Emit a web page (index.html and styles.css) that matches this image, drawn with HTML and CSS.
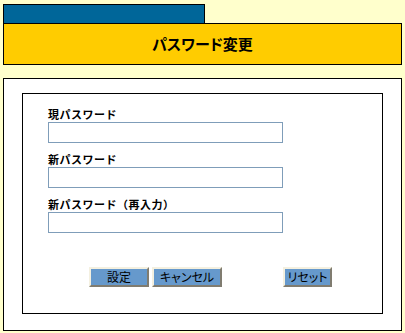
FILE: index.html
```html
<!DOCTYPE html>
<html lang="ja">
<head>
  <meta charset="UTF-8">
  <title>パスワード変更</title>
  <link rel="stylesheet" href="styles.css">
</head>
<body>

  <div class="tab"></div>
  <div class="header">パスワード変更</div>

  <div class="panel">
    <form class="box">
      <div class="field">
        <label for="current">現パスワード</label>
        <input type="password" id="current">
      </div>
      <div class="field">
        <label for="newpass">新パスワード</label>
        <input type="password" id="newpass">
      </div>
      <div class="field">
        <label for="confirm">新パスワード（再入力）</label>
        <input type="password" id="confirm">
      </div>

      <div class="buttons">
        <button type="button" class="btn btn-set">設定</button>
        <button type="button" class="btn btn-cancel">キャンセル</button>
        <button type="reset" class="btn btn-reset">リセット</button>
      </div>
    </form>
  </div>

</body>
</html>
```

FILE: styles.css
```css
body {
  font-family: "Noto Sans CJK JP", "DejaVu Sans", sans-serif;
  margin: 0;
  padding: 4px 3px 0 3px;
  background-color: #ffffcc;
}
.tab {
  width: 200px;
  height: 18px;
  background-color: #006699;
  border: 1px solid #000;
  margin-bottom: -1px;
}
.header {
  height: 40px;
  line-height: 40px;
  background-color: #ffcc00;
  border: 1px solid #000;
  text-align: center;
  font-size: 15px;
  font-weight: bold;
  color: #000;
  font-feature-settings: "palt";
}
.panel {
  margin-top: 13px;
  height: 253px;
  background-color: #fff;
  border: 1px solid #000;
  padding: 14px 0 0 18px;
  box-sizing: border-box;
}
.box {
  width: 361px;
  height: 221px;
  border: 1px solid #000;
  padding: 13px 0 0 25px;
  box-sizing: border-box;
}
.field {
  margin-bottom: 9px;
}
label {
  display: block;
  font-size: 11px;
  font-weight: bold;
  line-height: 14px;
  margin-bottom: 1px;
  letter-spacing: 0.5px;
}
input[type="password"] {
  display: block;
  width: 235px;
  height: 21px;
  margin: 0;
  padding: 0 3px;
  box-sizing: border-box;
  border: 1px solid #7f9db9;
  background: #fff;
}
.buttons {
  display: flex;
  margin-top: 34px;
  padding-left: 41px;
}
.btn {
  height: 20px;
  padding: 0;
  font-family: "Noto Sans CJK JP", sans-serif;
  font-size: 12px;
  line-height: 14px;
  white-space: nowrap;
  font-feature-settings: "palt";
  color: #000;
  background-color: #6699cc;
  border: 2px solid;
  border-color: #f4f0e0 #807c70 #807c70 #f4f0e0;
  cursor: pointer;
}
.btn-set {
  width: 60px;
}
.btn-cancel {
  width: 70px;
  margin-left: 3px;
}
.btn-reset {
  width: 49px;
  margin-left: 61px;
}
```
